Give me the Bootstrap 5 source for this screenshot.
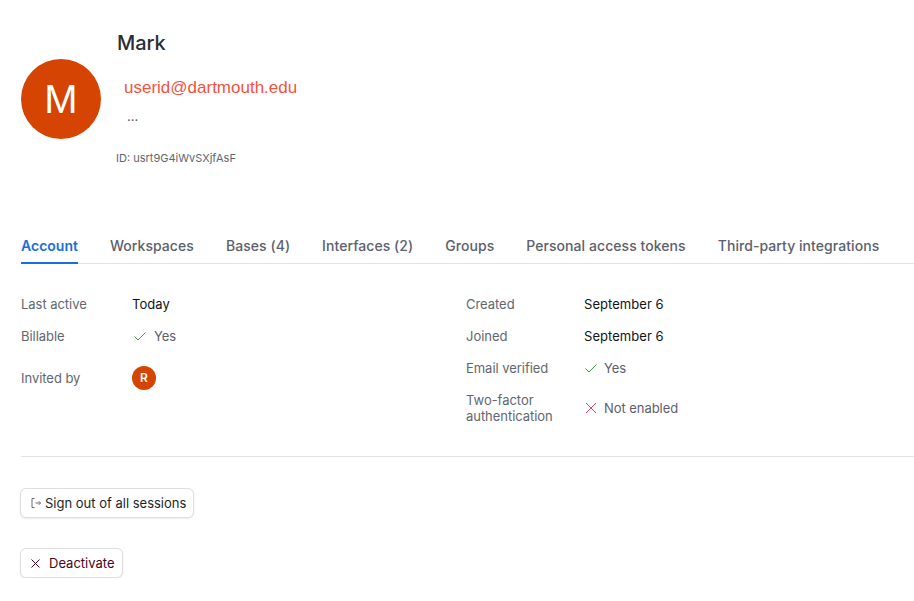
<!DOCTYPE html>
<html lang="en">
<head>
<meta charset="utf-8">
<title>Mark</title>
<link rel="stylesheet" href="https://cdn.jsdelivr.net/npm/bootstrap@5.3.0/dist/css/bootstrap.min.css">
<style>
body{font-family:Inter,"Liberation Sans",sans-serif;font-size:13px;color:#1d1f25;background:#fff;overflow:hidden}
.page-wrap{padding:0 0 0 21px}
.profile-head{height:182px}
.big-avatar{width:80px;height:80px;background:#d54402;color:#fff;font-size:40px;font-family:"Liberation Sans",sans-serif;margin-top:59px}
.head-text{margin-left:15px;padding-top:30px}
.user-name{font-size:20px;font-weight:500;line-height:26px;color:#2b2d33;margin:0 0 0 1px;letter-spacing:-.05px}
.user-mail{font-family:"Liberation Sans",sans-serif;font-size:17px;line-height:20px;color:#f5533d;margin:22px 0 0 8px}
.user-dots{font-size:13px;line-height:20px;color:#555a66;margin:8px 0 0 11px}
.user-id{font-size:11px;line-height:14px;color:#616670;margin:25px 0 0 0}
.tab-strip{margin-top:55px;border-bottom:1px solid #e1e3e7;gap:32px;height:27px}
.tab-item{font-size:14px;font-weight:500;line-height:18px;color:#5c606c;height:27px;padding-top:0;white-space:nowrap;text-decoration:none;letter-spacing:.06px}
.tab-item.is-on{color:#166ee1;font-weight:600;border-bottom:2px solid #166ee1;letter-spacing:0}
.facts{padding-top:24px;height:193px;border-bottom:1px solid #e1e3e7}
.fact-col-a{width:445px}
.fact-row{min-height:32px}
.fact-label{color:#616670;line-height:16px;letter-spacing:-.04px}
.fact-col-a .fact-label{width:111px}
.fact-col-b .fact-label{width:118px}
.fact-value{font-weight:400;color:#111318;margin-top:1px;letter-spacing:.05px}
.fact-plain{color:#5c606c;line-height:16px;letter-spacing:-.05px}
.tick{margin-right:6px;flex:none}
.mini-avatar{width:24px;height:24px;background:#d54402;color:#fff;font-size:12px;font-weight:600}
.row-tall{min-height:52px}
.row-auth{min-height:48px}
.act-btn{font-size:13px;line-height:16px;height:30px;padding:0 7px 0 9px;border:1px solid #dcdee2;border-radius:6px;background:#fff;color:#1d1f25;box-shadow:0 1px 2px rgba(0,0,0,.08);margin-left:-1px}
.act-danger{color:#4c0519;padding:0 8px 0 9px}
.btn-one{margin-top:31px}
.btn-two{margin-top:30px}
.sign-icon{margin-right:3px}
</style>
</head>
<body>
<div class="page-wrap">
  <div class="profile-head d-flex align-items-start">
    <div class="big-avatar rounded-circle d-flex align-items-center justify-content-center flex-shrink-0">M</div>
    <div class="head-text">
      <h1 class="user-name">Mark</h1>
      <p class="user-mail">userid@dartmouth.edu</p>
      <p class="user-dots">...</p>
      <p class="user-id">ID: usrt9G4iWvSXjfAsF</p>
    </div>
  </div>

  <div class="tab-strip d-flex">
    <a class="tab-item is-on" href="#">Account</a>
    <a class="tab-item" href="#">Workspaces</a>
    <a class="tab-item" href="#">Bases (4)</a>
    <a class="tab-item" href="#">Interfaces (2)</a>
    <a class="tab-item" href="#">Groups</a>
    <a class="tab-item" href="#">Personal access tokens</a>
    <a class="tab-item" href="#">Third-party integrations</a>
  </div>

  <div class="facts d-flex">
    <div class="fact-col-a">
      <div class="fact-row d-flex align-items-center"><div class="fact-label">Last active</div><div class="fact-value">Today</div></div>
      <div class="fact-row d-flex align-items-center"><div class="fact-label">Billable</div><div class="fact-plain d-flex align-items-center">
        <svg class="tick" width="16" height="16" viewBox="0 0 16 16" fill="none" stroke="#3b9b4a" stroke-width="1"><path d="M2.5 8.5 6 12 13.5 4.5"/></svg>Yes</div></div>
      <div class="fact-row row-tall d-flex align-items-center"><div class="fact-label">Invited by</div><div class="mini-avatar rounded-circle d-flex align-items-center justify-content-center">R</div></div>
    </div>
    <div class="fact-col-b">
      <div class="fact-row d-flex align-items-center"><div class="fact-label">Created</div><div class="fact-value">September 6</div></div>
      <div class="fact-row d-flex align-items-center"><div class="fact-label">Joined</div><div class="fact-value">September 6</div></div>
      <div class="fact-row d-flex align-items-center"><div class="fact-label">Email verified</div><div class="fact-plain d-flex align-items-center">
        <svg class="tick" width="14" height="16" viewBox="0 0 14 16" fill="none" stroke="#3b9b4a" stroke-width="1"><path d="M1.5 8.5 5 12 12.5 4.5"/></svg>Yes</div></div>
      <div class="fact-row row-auth d-flex align-items-center"><div class="fact-label">Two-factor<br>authentication</div><div class="fact-plain d-flex align-items-center">
        <svg class="tick" width="14" height="14" viewBox="0 0 14 14" fill="none" stroke="#dc3f6b" stroke-width="1"><path d="M2 2 12 12M12 2 2 12"/></svg>Not enabled</div></div>
    </div>
  </div>

  <div class="btn-one">
    <button type="button" class="btn act-btn d-inline-flex align-items-center">
      <svg class="sign-icon" width="12" height="12" viewBox="0 0 12 12" fill="none" stroke="#6b6f78" stroke-width="1"><path d="M4.5 1.5H2v9h2.5M5.5 6h5M8.8 4.2 10.6 6 8.8 7.8"/></svg>Sign out of all sessions
    </button>
  </div>
  <div class="btn-two">
    <button type="button" class="btn act-btn act-danger d-inline-flex align-items-center">
      <svg class="me-2" width="11" height="11" viewBox="0 0 11 11" fill="none" stroke="#4c0519" stroke-width="1"><path d="M1.5 1.5 9.5 9.5M9.5 1.5 1.5 9.5"/></svg>Deactivate
    </button>
  </div>
</div>
</body>
</html>
